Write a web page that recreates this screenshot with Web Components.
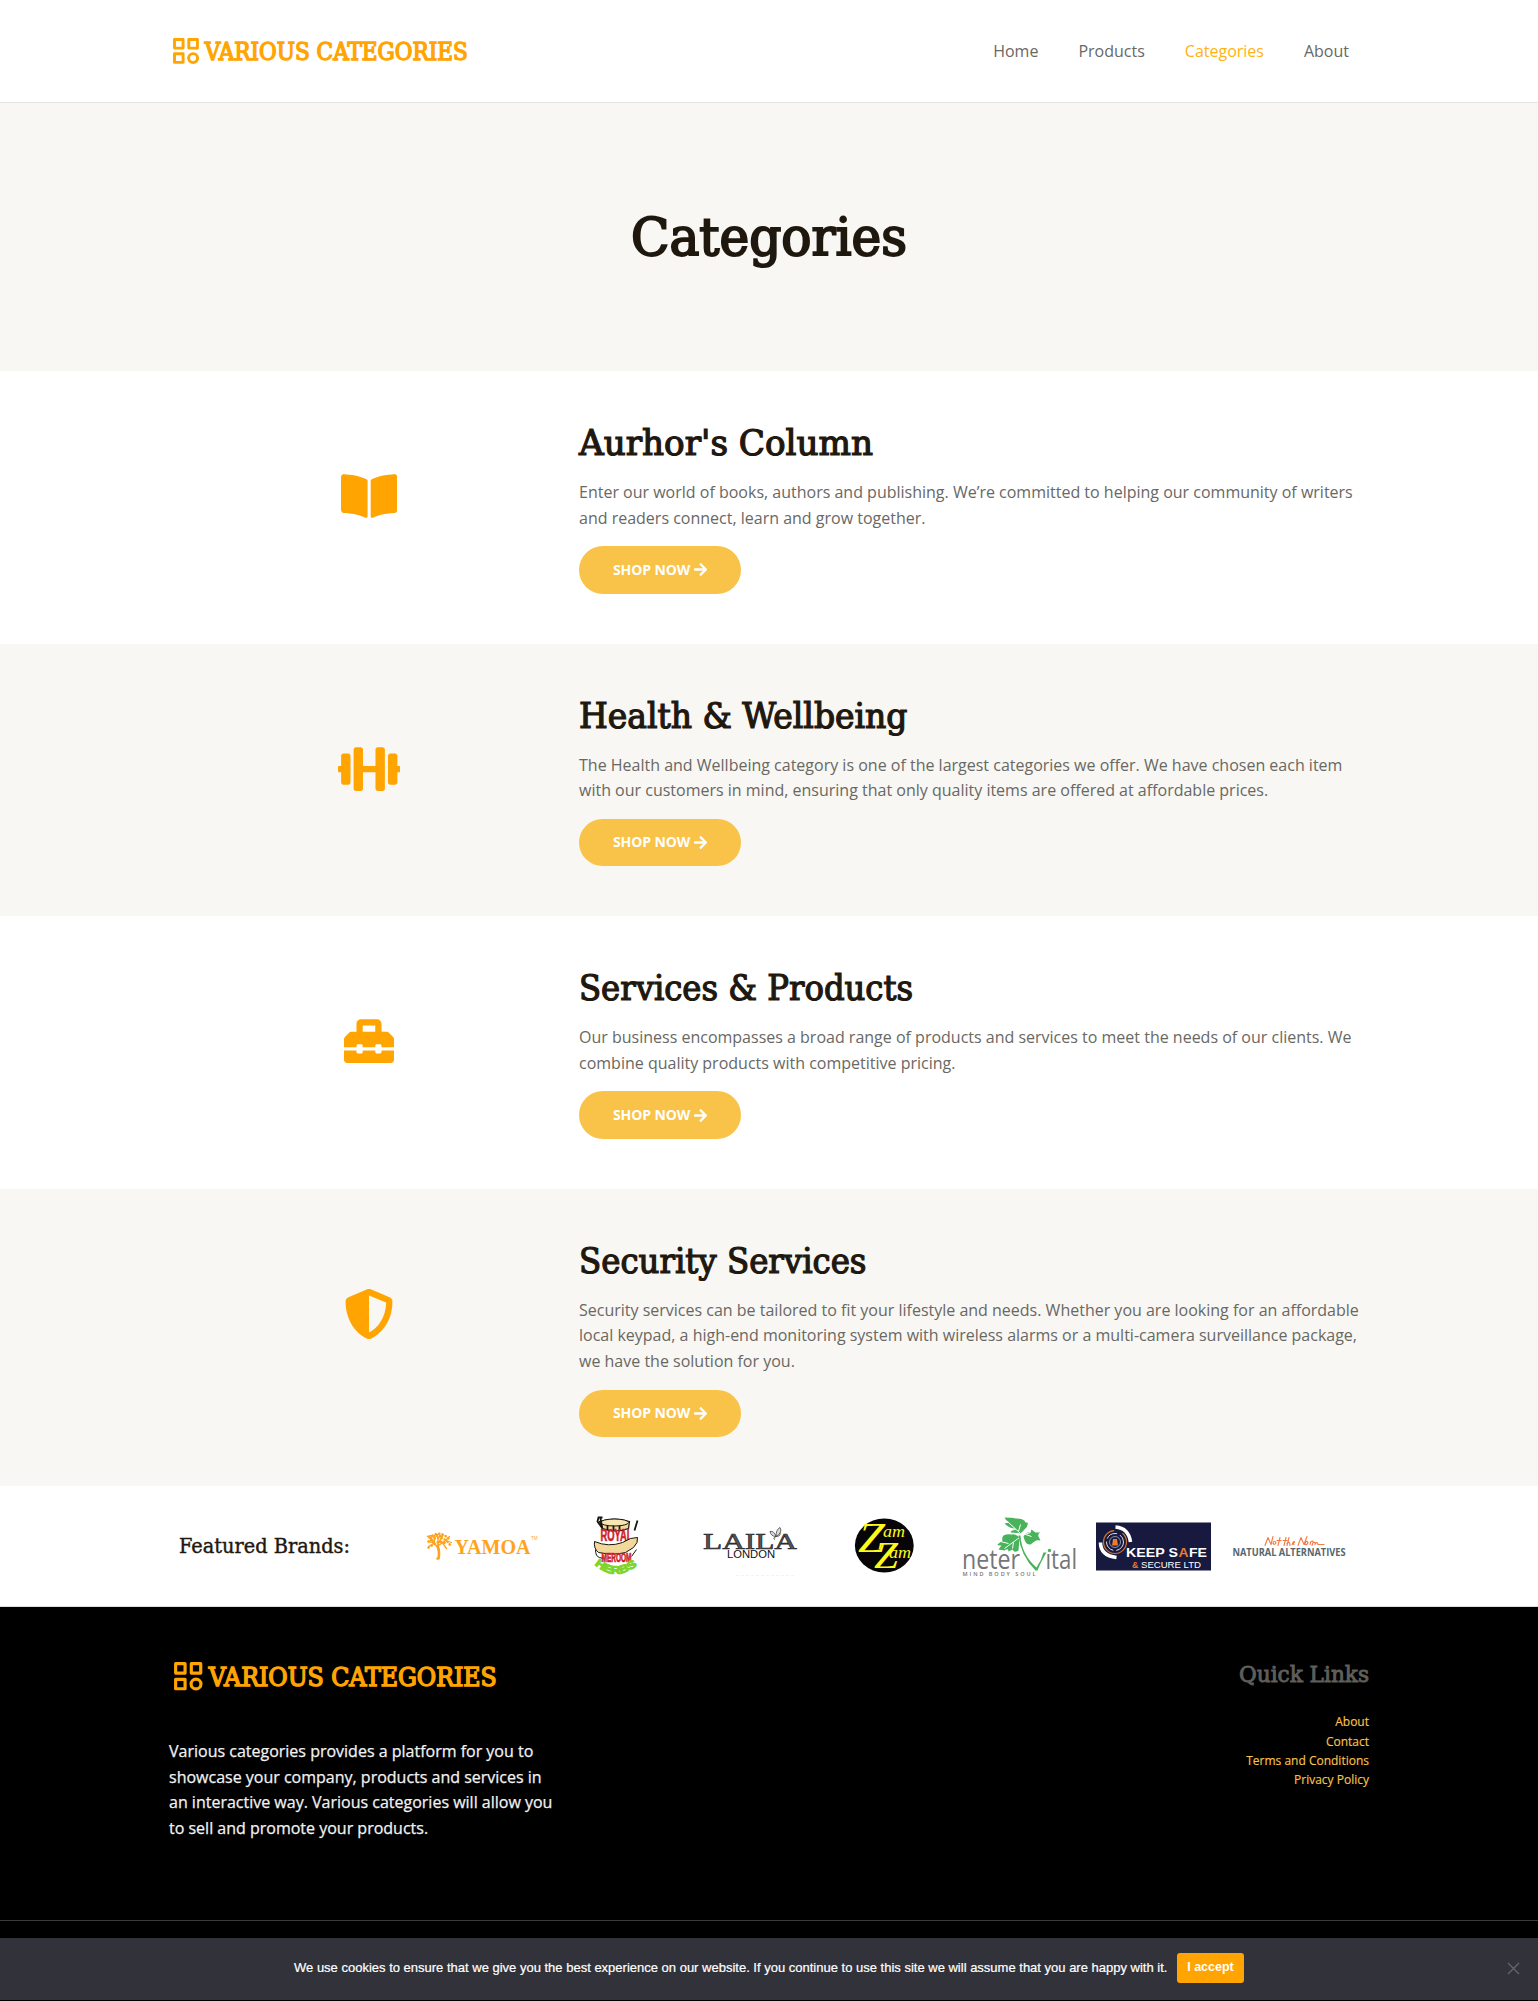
<!DOCTYPE html>
<html lang="en"><head><meta charset="utf-8"><title>Categories - Various Categories</title>
<style>
html,body{margin:0;padding:0}
body{font:16px/25.6px "Open Sans",sans-serif;color:#696863;background:#fff}
</style></head><body>
<vc-page></vc-page>
<script>
const define=(name,html)=>customElements.define(name,class extends HTMLElement{
  connectedCallback(){
    if(this.shadowRoot)return;
    const root=this.attachShadow({mode:'open'});
    root.innerHTML=typeof html==='function'?html(this):html;
  }
});

/* Serif display text set to an exact measure */
define('vc-serif',el=>{
  const w=+el.getAttribute('w'),h=+el.getAttribute('h'),s=el.getAttribute('size'),b=el.getAttribute('base'),k=el.getAttribute('ink')||.9;
  return `<style>:host{display:block;height:${h}px;width:${w}px}svg{display:block;overflow:visible}
  text{font:400 ${s}px "DejaVu Serif Condensed","DejaVu Serif",serif;font-stretch:condensed;fill:currentColor;stroke:currentColor;stroke-width:${k}px}</style>
  <svg width="${w}" height="${h}"><text x="0" y="${b}" textLength="${w}" lengthAdjust="spacingAndGlyphs">${el.getAttribute('text').replace('&','&amp;')}</text></svg>`;
});

define('vc-logo',el=>{
  const k=+el.getAttribute('scale')||1;
  return `<style>:host{display:block;color:#ffa400}svg{display:block;overflow:visible}
  text{font:400 23.6px "DejaVu Serif Condensed","DejaVu Serif",serif;font-stretch:condensed;fill:currentColor;stroke:currentColor;stroke-width:1.3px}</style>
  <svg width="${295*k}" height="${26*k}" viewBox="0 0 295 26">
  <g fill="none" stroke="currentColor" stroke-width="2.9" stroke-linejoin="round"><path d="M1.5 1.5h8.6v8.6H1.5zM15.8 1.5h8.6v8.6h-8.6zM1.5 15.8h8.6v8.6H1.5z"/><circle cx="20.1" cy="20.1" r="4.5"/></g>
  <text x="31.8" y="21.5" textLength="263" lengthAdjust="spacingAndGlyphs">VARIOUS CATEGORIES</text></svg>`;
});

define('vc-header',`<style>
:host{display:block;height:102px;border-bottom:1px solid #e4e4e7;background:#fff}
.in{width:1200px;height:102px;margin:0 auto;display:flex;align-items:center;justify-content:space-between}
vc-logo{margin-left:4px}
nav{display:flex;gap:40px;margin:2px 20px 0 0}
a{color:#696863}a.on{color:#ffb213}
</style><div class="in"><vc-logo></vc-logo><nav><a>Home</a><a>Products</a><a class="on">Categories</a><a>About</a></nav></div>`);

define('vc-hero',`<style>
:host{display:flex;height:268px;background:#f8f7f3;color:#1f180f;align-items:center;justify-content:center}
h1{margin:0}
</style><h1><vc-serif text="Categories" w="276" h="68" size="51.5" base="51.5" ink="1.9"></vc-serif></h1>`);

define('vc-button',`<style>
:host{display:flex;width:162px;height:47.4px;border-radius:24px;background:#f9c349;color:#fff;align-items:center;justify-content:center;gap:4px;font-weight:700;font-size:14px;line-height:14px}
span{width:77px;white-space:nowrap;letter-spacing:-.1px}svg{display:block}
</style><span><slot></slot></span><svg width="13.2" height="15" viewBox="0 0 448 512"><path fill="currentColor" d="M190.5 66.9l22.2-22.2c9.4-9.4 24.6-9.4 33.9 0L441 239c9.4 9.4 9.4 24.6 0 33.9L246.6 467.3c-9.4 9.4-24.6 9.4-33.9 0l-22.2-22.2c-9.5-9.5-9.3-25 .4-34.3L311.4 296H24c-13.3 0-24-10.7-24-24v-32c0-13.3 10.7-24 24-24h287.4L190.9 101.2c-9.8-9.3-10-24.8-.4-34.3z"/></svg>`);

const icons={
book:[576,'M542.22 32.05c-54.8 3.11-163.72 14.43-230.96 55.59-4.64 2.84-7.27 7.89-7.27 13.17v363.87c0 11.55 12.63 18.85 23.28 13.49 69.18-34.82 169.23-44.32 218.7-46.92 16.89-.89 30.02-14.43 30.02-30.66V62.75c.01-17.71-15.35-31.74-33.77-30.7zM264.73 87.64C197.5 46.48 88.58 35.17 33.78 32.05 15.36 31.01 0 45.04 0 62.75V400.6c0 16.24 13.13 29.78 30.02 30.66 49.49 2.6 149.59 12.11 218.77 46.95 10.62 5.35 23.21-1.94 23.21-13.46V100.63c0-5.29-2.62-10.14-7.27-12.99z'],
dumbbell:[640,'M104 96H56c-13.3 0-24 10.7-24 24v104H8c-4.4 0-8 3.6-8 8v48c0 4.4 3.6 8 8 8h24v104c0 13.3 10.7 24 24 24h48c13.3 0 24-10.7 24-24V120c0-13.3-10.7-24-24-24zm528 128h-24V120c0-13.3-10.7-24-24-24h-48c-13.3 0-24 10.7-24 24v272c0 13.3 10.7 24 24 24h48c13.3 0 24-10.7 24-24V288h24c4.4 0 8-3.6 8-8v-48c0-4.4-3.6-8-8-8zM456 32h-48c-13.3 0-24 10.7-24 24v168H256V56c0-13.3-10.7-24-24-24h-48c-13.3 0-24 10.7-24 24v400c0 13.3 10.7 24 24 24h48c13.3 0 24-10.7 24-24V288h128v168c0 13.3 10.7 24 24 24h48c13.3 0 24-10.7 24-24V56c0-13.3-10.7-24-24-24z'],
toolbox:[512,'M502.63 214.63l-45.25-45.25c-6-6-14.14-9.37-22.63-9.37H384V80c0-26.51-21.49-48-48-48H176c-26.51 0-48 21.49-48 48v80H77.25c-8.49 0-16.62 3.37-22.63 9.37L9.37 214.63c-6 6-9.37 14.14-9.37 22.63V320h128v-16c0-8.84 7.16-16 16-16h32c8.84 0 16 7.16 16 16v16h128v-16c0-8.84 7.16-16 16-16h32c8.84 0 16 7.16 16 16v16h128v-82.75c0-8.48-3.37-16.62-9.37-22.62zM320 160H192V96h128v64zm64 208c0 8.84-7.16 16-16 16h-32c-8.84 0-16-7.16-16-16v-16H192v16c0 8.84-7.16 16-16 16h-32c-8.84 0-16-7.16-16-16v-16H0v96c0 17.67 14.33 32 32 32h448c17.67 0 32-14.33 32-32v-96H384v16z'],
shield:[512,'M466.5 83.7l-192-80a48.15 48.15 0 0 0-36.9 0l-192 80C27.7 91.1 16 108.6 16 128c0 198.5 114.5 335.7 221.5 380.3 11.8 4.9 25.1 4.9 36.9 0C360.1 472.6 496 349.3 496 128c0-19.4-11.7-36.9-29.5-44.3zM256.1 446.3l-.1-381 175.9 73.3c-3.3 151.4-82.1 261.1-175.8 307.7z']};

define('vc-category',el=>{
  const [w,d]=icons[el.getAttribute('icon')];
  return `<style>
  :host{display:block;background:${el.hasAttribute('tint')?'#f8f7f3':'#fff'}}
  .in{width:1200px;margin:0 auto;display:grid;grid-template-columns:400px 1fr;align-items:center;padding:50px 0 ${el.getAttribute('foot')||50}px}
  .icon{display:flex;justify-content:center;align-items:center;padding-bottom:${el.getAttribute('lift')||22.5}px;color:#ffa400}
  .body{padding-left:10px}
  h2{margin:0 0 17px;color:#1f180f}p{margin:0 0 15px;white-space:nowrap}
  </style><div class="in"><div class="icon"><svg width="${w*50/512}" height="50" viewBox="0 0 ${w} 512"><path fill="currentColor" d="${d}"/></svg></div>
  <div class="body"><h2><vc-serif text="${el.getAttribute('heading')}" w="${el.getAttribute('w')}" h="42" size="35.4" base="33.7" ink="1.2"></vc-serif></h2><p><slot></slot></p><vc-button>SHOP NOW</vc-button></div></div>`;
});

const brands=[
[423.5,`<g fill="none" stroke="#ffa31c" stroke-linecap="round"><path stroke-width="2.6" d="M438 1558q1.5-6-1-13m1 13h-1"/><path stroke-width="1.3" d="M438 1548l-5-6-5-1m5 1 -4-5m5 5 0-7m4 11-1-12m1 8 5-8m-5 11 7-5 4-4m-4 4 6 2m-12 0 3-8m-10 1-2 5m11 1 5 7m-13-5-5 3m3-11-4 1"/><g stroke-width="2.5" stroke-dasharray=".3 3.2"><path d="M429 1537l5-3 6-1 6 3 4 4"/><path d="M428 1541l5-3 7-1 6 3 4 5M428 1547l5-3 6-3 8 2M432 1540l3-5 8 1"/></g></g><text x="454" y="1553.7" textLength="76" lengthAdjust="spacingAndGlyphs" font-family="Liberation Serif" font-weight="700" font-size="22" fill="#ffa31c">YAMOA</text><text x="530.5" y="1539" textLength="6.5" lengthAdjust="spacingAndGlyphs" font-family="Liberation Sans" font-size="6" fill="#ffa31c">TM</text>`],
[558.5,`<path fill="#f1d99c" stroke="#17150f" stroke-width="1.2" d="M600 1521q15-5 30 0l-1 7q-13 5-26 0z"/><ellipse cx="615" cy="1522" rx="14" ry="3.5" fill="#f7e6b2" stroke="#17150f"/><path fill="none" stroke="#17150f" stroke-width="1.8" d="M601 1518l2 11m35-9-3 10m-32-13-4 0-1 4 5 7m5-3v5m6-5v6m6-6v5"/><text x="601" y="1540.5" textLength="32" lengthAdjust="spacingAndGlyphs" font-family="Liberation Sans" font-weight="700" font-size="16" fill="#d01e2b" stroke="#d01e2b" stroke-width=".6">ROYAL</text><path fill="#f1d99c" stroke="#17150f" stroke-width="1" d="M595 1541q14 6 28 1l8-4 7-1q1 5-4 10l-8 5q-12 3-27 0-5-4-4-11z"/><path d="M596 1549q0 7 4 8l4 1m28-2 5-7" fill="none" stroke="#17150f"/><text x="602" y="1561" textLength="30" lengthAdjust="spacingAndGlyphs" font-family="Liberation Sans" font-weight="700" font-size="12.5" fill="#d01e2b" stroke="#d01e2b" stroke-width=".7">MEROOM</text><path id="herb" d="M595 1564q21 19 45-1" fill="none"/><text font-family="Liberation Sans" font-weight="700" font-size="11" fill="#7fd52a" stroke="#7fd52a" stroke-width="1.1"><textPath href="#herb" textLength="47" lengthAdjust="spacingAndGlyphs">HERBS</textPath></text>`],
[693,`<text x="703" y="1548" textLength="94" lengthAdjust="spacingAndGlyphs" font-family="Liberation Serif" font-weight="400" font-size="24" fill="#555" stroke="#222" stroke-width=".6">LAILA</text><text x="727" y="1557" textLength="48" lengthAdjust="spacingAndGlyphs" font-family="Liberation Sans" font-size="10.5" fill="#111">LONDON</text><path fill="#ddd" stroke="#444" stroke-width=".8" d="M776 1536q-2-6-6-5 1 5 6 5zq0-7 4-9 3 5-4 9zq5 0 4-4m-4 4q-4 2-1 3"/><path d="M736 1575h60" stroke="#eeeef0" stroke-dasharray="3 2" stroke-width=".7"/>`],
[826,`<ellipse cx="883.3" cy="1545" rx="29.4" ry="27" fill="#080508"/><g font-family="Liberation Serif" font-style="italic" fill="#fbfa1a"><text x="857" y="1551.5" font-size="42" textLength="27" lengthAdjust="spacingAndGlyphs">Z</text><text x="882" y="1536" font-size="17" textLength="22" lengthAdjust="spacingAndGlyphs">am</text><text x="873" y="1567" font-size="37" textLength="24" lengthAdjust="spacingAndGlyphs">Z</text><text x="888" y="1557.5" font-size="17" textLength="22" lengthAdjust="spacingAndGlyphs">am</text></g>`],
[961.5,`<g fill="#48b35a"><path d="M1020 1533q-6-1-10-1 1-3 5-4-6 0-11-5l5-1q-4-2-5-5 8 0 11 1 9 0 10 4l2 0q1 4-3 7zM1023 1536q3-5 7-4l1-3 4 3 5 0q-3 1-2 4l2 4q-4-1-6 1l-4 3q-5 1-7-8zM1019 1537l-1 13q-4 3-6-1l-4 2q0-4-4-1l-6-1 3-4q-4 0-4-1l5-4q-1-3 1-5 4-2 8-1 4-1 8 3z"/><path fill="none" stroke="#fff" stroke-width="1" d="M1020 1533l-12-11m7 7-6 1m9 1 2-7m1 11 9-3m-5 2 6 2m-12 1-15 11m9-6-1 6m-4-5-8-2"/><path d="M1020 1535q1 19 16 32 5-7 7-15l3 0q-6 10-9 18h-2q-15-15-17-35z"/><circle cx="1049" cy="1550" r="1.7"/></g><g fill="#76767a" font-family="Open Sans" font-weight="400"><text x="961.5" y="1568.5" font-size="27" textLength="58" lengthAdjust="spacingAndGlyphs">neter</text><text x="1045" y="1568.5" font-size="27" textLength="31.5" lengthAdjust="spacingAndGlyphs">&#305;tal</text><text x="962" y="1575" font-size="5.5" font-weight="600" textLength="74" letter-spacing="1">MIND BODY SOUL</text></g>`],
[1096,`<path fill="#17193f" d="M1096 1522h115v48h-115z"/><g fill="none"><circle cx="1115" cy="1541.5" r="8.5" stroke="#dedee8" stroke-width="1" stroke-dasharray="12 3"/><circle cx="1115" cy="1541.5" r="11.5" stroke="#d3702f" stroke-width="1.2" stroke-dasharray="53 9"/><circle cx="1115" cy="1541.5" r="5.5" stroke="#dedee8" stroke-width=".6"/><path stroke="#fff" stroke-width="3.6" d="M1115.5 1526.5q13 1 15 15M1100.5 1542q0 13 16 15"/></g><path fill="#ec7b2d" d="M1112 1545l1-6.500h4l1 6.500z"/><g font-family="Liberation Sans" fill="#fff"><text x="1126" y="1556.7" font-size="12.8" font-weight="700" textLength="52" lengthAdjust="spacingAndGlyphs">KEEP S</text><text x="1178.500" y="1556.7" font-size="12.8" font-weight="700" fill="#ec7b2d" textLength="10" lengthAdjust="spacingAndGlyphs">A</text><text x="1189" y="1556.7" font-size="12.8" font-weight="700" textLength="18" lengthAdjust="spacingAndGlyphs">FE</text><text x="1132" y="1567" font-size="8.8" font-weight="700" fill="#ec7b2d">&amp;</text><text x="1141" y="1567" font-size="8.8" textLength="60" lengthAdjust="spacingAndGlyphs">SECURE LTD</text></g>`],
[1230,`<text x="1231.5" y="1555.8" font-family="Open Sans" font-weight="700" font-size="10.2" textLength="113" lengthAdjust="spacingAndGlyphs" fill="#53666f">NATURAL ALTERNATIVES</text><path fill="none" stroke="#f27a45" stroke-width="1.1" stroke-linecap="round" stroke-linejoin="round" d="M1264 1545l3-8 3 7 2-8m0 7q1-4 3-1-1 3-3 1m5 2 2-8m-3 3h4m3 5 2-8m-3 3h4m0 5 2-8m-2 6q3-3 3 2m2-1q4-3 2-3-3 2 0 3m4 1 3-8 3 7 3-8m-2 8q1-5 3-2-1 3-3 2m5 0 1-3q2-1 2 0m-1 4 1-3q3-1 2 2 2-4 3 0l6 0"/>`]
];
define('vc-brands',`<style>
:host{display:block;background:#fff;border-bottom:1px solid #ddd}
.in{width:1200px;height:120px;margin:0 auto;display:flex;align-items:center;color:#1f180f}
h2{margin:0 64px 0 10px}
.list{display:grid;grid-template-columns:repeat(7,134.5px);justify-items:center;padding-top:2px}
svg{display:block;overflow:visible}
</style><div class="in"><h2><vc-serif text="Featured Brands:" w="171" h="30" size="20.8" base="22" ink=".4"></vc-serif></h2><div class="list">${brands.map(([x,s])=>`<svg width="115" height="62" viewBox="${x} 1515.5 115 62">${s}</svg>`).join('')}</div></div>`);

define('vc-footer',`<style>
:host{display:block;background:#000;height:394px}
.in{width:1200px;height:313px;margin:0 auto;display:flex;justify-content:space-between}
.left{padding-top:55px}vc-logo{margin-left:4.5px}
p{margin:49px 0 0;width:400px;color:#f2f2f2;font-weight:500;-webkit-text-stroke:.25px #f2f2f2}
.right{padding-top:52px;display:flex;flex-direction:column;align-items:flex-end}
h2{margin:0 0 23.8px;color:#5f5e59}
a{display:block;font-size:12px;line-height:19.2px;color:#f9c349;-webkit-text-stroke:.15px #f9c349}
hr{border:0;border-top:1px solid #3a3a3a;margin:0}
</style><div class="in"><div class="left"><vc-logo scale="1.095"></vc-logo><p>Various categories provides a platform for you to<br>showcase your company, products and services in<br>an interactive way. Various categories will allow you<br>to sell and promote your products.</p></div>
<div class="right"><h2><vc-serif text="Quick Links" w="130" h="30" size="23" base="23" ink=".9"></vc-serif></h2><a>About</a><a>Contact</a><a>Terms and Conditions</a><a>Privacy Policy</a></div></div><hr>`);

define('vc-cookie',`<style>
:host{position:fixed;left:0;right:0;bottom:1px;height:62px;box-sizing:border-box;padding-bottom:2px;background:#32323a;color:#fff;display:flex;align-items:center;justify-content:center;font:13px/20px "Liberation Sans",Arial,sans-serif}
.msg{display:block;width:873px;white-space:nowrap;margin:-1px 10px 0 0;-webkit-text-stroke:.2px #fff}
.ok{background:#ffa400;border-radius:3px;width:67px;height:30px;line-height:29px;text-align:center;font-weight:700;font-size:12.5px}
.x{position:absolute;right:18px;top:24px}
</style><span class="msg"><slot></slot></span><span class="ok">I accept</span><svg class="x" width="13" height="13"><path d="M1 1l11 11M12 1L1 12" stroke="#66666c" stroke-width="1.2"/></svg>`);

define('vc-page',`<style>:host{display:block;height:2001px;overflow:hidden}</style>
<vc-header></vc-header><vc-hero></vc-hero>
<vc-category icon="book" heading="Aurhor's Column" w="294">Enter our world of books, authors and publishing. We’re committed to helping our community of writers<br>and readers connect, learn and grow together.</vc-category>
<vc-category icon="dumbbell" tint heading="Health &amp; Wellbeing" w="328.5">The Health and Wellbeing category is one of the largest categories we offer. We have chosen each item<br>with our customers in mind, ensuring that only quality items are offered at affordable prices.</vc-category>
<vc-category icon="toolbox" heading="Services &amp; Products" w="334">Our business encompasses a broad range of products and services to meet the needs of our clients. We<br>combine quality products with competitive pricing.</vc-category>
<vc-category icon="shield" tint heading="Security Services" w="287.5" lift="48" foot="48.600">Security services can be tailored to fit your lifestyle and needs. Whether you are looking for an affordable<br>local keypad, a high-end monitoring system with wireless alarms or a multi-camera surveillance package,<br>we have the solution for you.</vc-category>
<vc-brands></vc-brands><vc-footer></vc-footer>
<vc-cookie>We use cookies to ensure that we give you the best experience on our website. If you continue to use this site we will assume that you are happy with it.</vc-cookie>`);
</script></body></html>
